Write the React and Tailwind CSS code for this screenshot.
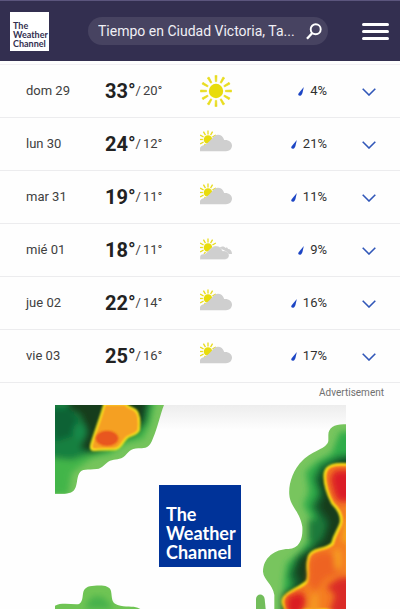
import { useState } from 'react';

const days = [
    { label: 'dom 29', high: 33, low: 20, icon: 'sun', rain: 4 },
    { label: 'lun 30', high: 24, low: 12, icon: 'cloud', rain: 21 },
    { label: 'mar 31', high: 19, low: 11, icon: 'cloud', rain: 11 },
    { label: 'mié 01', high: 18, low: 11, icon: 'clouds', rain: 9 },
    { label: 'jue 02', high: 22, low: 14, icon: 'cloud', rain: 16 },
    { label: 'vie 03', high: 25, low: 16, icon: 'cloud', rain: 17 },
];

const rays = [0, 30, 60, 90, 120, 150, 180, 210, 240, 270, 300, 330];

const SunIcon = () => (
    <svg viewBox="0 0 32 32" className="size-8">
        <circle cx="16" cy="16" r="7.2" fill="#e8dc0c" />
        {rays.map((angle) => (
            <path
                key={angle}
                d="M15.300 6.600L15 .4H17L16.700 6.600Z"
                fill="#e8dc1c"
                stroke="#e8dc1c"
                strokeWidth="0.6"
                transform={`rotate(${angle} 16 16)`}
            />
        ))}
    </svg>
);

const CloudIcon = ({ double }) => (
    <svg viewBox="0 0 32 32" className="size-8">
        <g transform={double ? 'translate(0 2)' : undefined}>
            <circle cx="8" cy="11.500" r="4.300" fill="#e8dc0c" />
            {rays.map((angle) => (
                <path
                    key={angle}
                    d="M8 6.400V2.400"
                    stroke="#e8dc1c"
                    strokeWidth="1.300"
                    transform={`rotate(${angle} 8 11.500)`}
                />
            ))}
            {double && (
                <path
                    d="M19 12.500C20.500 10.300 23.500 9.800 25.500 12C26.500 11.300 27.500 11.500 28 13C30.500 13 32 15 32 18H27C26 15 23 13 19 12.500Z"
                    fill="#d0d0d0"
                />
            )}
            {double ? (
                <path
                    d="M0 23.500V21C0 19 2 17.800 4.500 18C6.500 17 9 14.500 11.500 12C15 8.500 21 10 22.500 15C26.500 14.500 29 17 29 19.500C29 22 26.500 23.500 24 23.500Z"
                    fill="#cfcfcf"
                    stroke="#fdfdfd"
                    strokeWidth="0.3"
                />
            ) : (
                <path
                    d="M0 23.200V20.500C0 18.500 2 17.500 4.500 17.300C7 16 9 13.500 12 10.500C15 5 22.500 5.500 24.200 12C29 11.600 32 14.300 32 17.500C32 21 29.500 23.200 26 23.200Z"
                    fill="#cfcfcf"
                />
            )}
        </g>
    </svg>
);

const DropIcon = () => (
    <svg viewBox="0 0 6 9" className="h-[9px] w-1.5">
        <path d="M5.800 0L4.400 6.200C3.800 8.300 2 9.100 .9 8.600C-.1 8.100 .1 7 .9 6Z" fill="#1c45c4" />
    </svg>
);

const DayRow = ({ day }) => {
    const [open, setOpen] = useState(false);

    return (
        <li className="flex h-[53px] items-center border-b border-[#ececee] pl-[26px] pr-6">
            <span className="w-[79px] text-[13px] text-[#404040]">{day.label}</span>
            <span className="flex w-[95px] items-center text-[#404040]">
                <span className="text-[20px] font-bold text-[#222222]">
                    {day.high}
                    <span className="font-medium">°</span>
                </span>
                <span className="text-[13px]">/</span>
                <span className="ml-0.5 text-[13px]">{day.low}°</span>
            </span>
            {day.icon === 'sun' ? <SunIcon /> : <CloudIcon double={day.icon === 'clouds'} />}
            <span className="ml-auto flex items-center gap-1.5 text-[13px] text-[#303030]">
                <DropIcon />
                {day.rain}%
            </span>
            <button
                type="button"
                aria-label={day.label}
                aria-expanded={open}
                onClick={() => setOpen(!open)}
                className="ml-[35px] pt-0.5"
            >
                <svg viewBox="0 0 14 8" className="h-2 w-3.5" fill="none" stroke="#3157b8" strokeWidth="1.6">
                    <path d="M.7 .8L7 7L13.300 .8" />
                </svg>
            </button>
        </li>
    );
};

// Radar map, three units per pixel
const RadarAd = () => (
    <svg viewBox="0 0 873 612" className="block w-full" aria-hidden="true">
        <defs>
            <linearGradient id="fade" x1="0" y1="0" x2="0" y2="1">
                <stop offset="0" stopColor="#ededed" />
                <stop offset="1" stopColor="#fefefe" />
            </linearGradient>
            <filter id="soft" x="-30%" y="-30%" width="160%" height="160%">
                <feGaussianBlur stdDeviation="10" />
            </filter>
            <filter id="edge" x="-10%" y="-10%" width="120%" height="120%">
                <feGaussianBlur stdDeviation="2.5" />
            </filter>
            <clipPath id="west">
                <path d="M0 0H327C315 30 308 68 294 100C284 130 270 130 255 130C228 128 220 142 210 152C195 166 180 161 165 167C150 174 144 190 125 192C98 195 80 190 72 206C64 222 68 244 55 258C43 268 20 267 0 266Z" />
            </clipPath>
            <clipPath id="east">
                <path d="M873 58C840 56 820 68 820 90V108C815 132 775 135 744 165C712 195 700 240 703 270C706 305 735 320 742 365C744 400 735 430 700 432C660 432 624 458 624 500C626 525 652 535 658 570V612H873Z" />
            </clipPath>
        </defs>
        <rect width="873" height="612" fill="#fefefe" />
        <rect x="300" width="573" height="75" fill="url(#fade)" />

        <g clipPath="url(#west)">
            <rect width="340" height="280" fill="#76c45c" />
            <g filter="url(#soft)">
                <path d="M-30-30H305L285 60L265 102L215 115L170 145L110 160L75 185L50 205L40 270L-30 270Z" fill="#43b548" />
                <path d="M-30-30H293L278 50L250 88L205 105L160 135L95 150L50 165L0 160L-30 150Z" fill="#128040" />
                <path d="M50-20H280L268 50L240 85L195 105L160 130L105 145L75 130L95 80L75 30L40 10V-20Z" fill="#153d1c" />
                <path d="M-20 10H40L70 45L60 90L0 110Z" fill="#0d6236" />
                <ellipse cx="74" cy="80" rx="20" ry="26" fill="#178a4a" />
            </g>
            <path d="M148-4C140 30 120 80 109 118C104 136 114 136 128 134L180 133C200 130 200 112 216 98C232 88 248 88 252 74C254 55 256 32 244 18C232 4 215 10 214-4Z" fill="#f5a020" stroke="#fff01e" strokeWidth="6" filter="url(#edge)" />
            <ellipse cx="156" cy="100" rx="34" ry="23" fill="#e9571f" filter="url(#edge)" />
            <ellipse cx="156" cy="100" rx="28" ry="18" fill="#e8561f" />
        </g>

        <g clipPath="url(#east)">
            <rect x="610" y="50" width="263" height="562" fill="#78c55e" />
            <g filter="url(#soft)">
                <path d="M900 80H855L830 145L785 170L752 200L762 260L745 300L770 345L765 400L735 440L695 475L688 520L680 630H900Z" fill="#2fac49" />
                <path d="M900 145L850 152L795 180L775 220L790 265L768 305L795 350L790 400L755 430L720 460L700 510L712 540L680 570V630H900Z" fill="#166532" />
                <path d="M900 160L850 170L810 195L792 230L805 270L790 305L820 350L805 400L775 430L735 455L720 500L735 535L690 575V630H900Z" fill="#123c1c" />
                <path d="M760 345L800 342L812 365L795 405L760 410Z" fill="#1a7a3a" />
            </g>
            <path d="M880 179C840 176 814 180 810 205C806 240 820 270 832 294C850 312 862 330 858 354C852 374 840 384 832 416C805 440 764 428 761 462C752 490 768 515 755 530C730 552 696 560 686 580C678 594 689 602 692 616H880Z" fill="#f47c20" stroke="#ffe719" strokeWidth="8" filter="url(#edge)" />
            <g filter="url(#soft)">
                <path d="M900 195H840L825 220L838 270L850 290H900Z" fill="#db1f28" />
                <path d="M900 330L870 350L860 410L900 415Z" fill="#f5a91e" />
                <path d="M765 460L800 440L850 450L860 500L810 520L780 560L760 530Z" fill="#ee6421" />
                <path d="M835 435H858V490L842 495Z" fill="#f7a021" />
                <path d="M900 515L850 520L815 545L840 570L820 630H900Z" fill="#da2a28" />
                <path d="M695 575L740 560L755 590L735 630H695Z" fill="#da1c24" />
                <path d="M770 570L790 560V630H760Z" fill="#f59a22" />
            </g>
        </g>

        <path d="M603 612V582C604 564 627 564 629 582L632 612Z" fill="#72bd5b" />
        <path d="M0 602C16 594 40 597 64 598C82 598 82 580 84 566C86 548 98 543 118 542C142 540 164 541 168 558C172 580 168 594 188 600C210 607 235 603 248 608L256 612H0Z" fill="#6fc454" />
        <path d="M90 612C98 585 110 575 128 574C148 575 160 590 175 612Z" fill="#46b14b" filter="url(#soft)" />
    </svg>
);

const App = () => {
    const [query, setQuery] = useState('Tiempo en Ciudad Victoria, Ta...');

    return (
        <div className="min-h-screen bg-[#fefefe] font-['Roboto',sans-serif]">
            <header className="flex h-[61px] items-center border-t border-[#5b557d] bg-[#332f50] pl-2.5 pr-[11px]">
                <a
                    href="#"
                    className="flex size-[39px] shrink-0 items-end bg-white pb-[3px] pl-[3px] font-['Lato',sans-serif] text-[9px] leading-[9px] font-bold text-[#332f50]"
                >
                    The Weather Channel
                </a>
                <form
                    onSubmit={(e) => e.preventDefault()}
                    className="ml-[39px] flex h-7 min-w-0 flex-1 items-center rounded-full bg-[#474361] pl-2.5 pr-1.5"
                >
                    <input
                        type="text"
                        aria-label="Buscar"
                        value={query}
                        onChange={(e) => setQuery(e.target.value)}
                        className="min-w-0 flex-1 text-[14px] text-[#f0eff5] outline-none"
                    />
                    <button type="submit" aria-label="Buscar">
                        <svg viewBox="0 0 16 17" className="h-[17px] w-4" fill="none" stroke="#fff" strokeWidth="1.9">
                            <circle cx="9.700" cy="6.300" r="5" />
                            <path d="M6.300 10L1 15.800" strokeWidth="2.300" />
                        </svg>
                    </button>
                </form>
                <button type="button" aria-label="Menú" className="ml-[34px] flex w-[27px] flex-col gap-1">
                    <span className="h-[3px] rounded-full bg-white" />
                    <span className="h-[3px] rounded-full bg-white" />
                    <span className="h-[3px] rounded-full bg-white" />
                </button>
            </header>

            <main>
                <ul className="mt-[3px] border-t border-[#f3f1f5]">
                    {days.map((day) => (
                        <DayRow key={day.label} day={day} />
                    ))}
                </ul>
                <p className="pr-4 pb-0.5 text-right text-[10px] leading-5 text-[#707070]">Advertisement</p>
                <a href="#" className="relative ml-[55px] mr-[54px] block">
                    <RadarAd />
                    <span className="absolute top-20 left-[104px] flex size-[82px] items-end bg-[#003399] pb-[5px] pl-[7px] font-['Lato',sans-serif] text-[18px] leading-[19px] font-bold text-white">
                        The Weather Channel
                    </span>
                </a>
            </main>
        </div>
    );
};

export default App;
